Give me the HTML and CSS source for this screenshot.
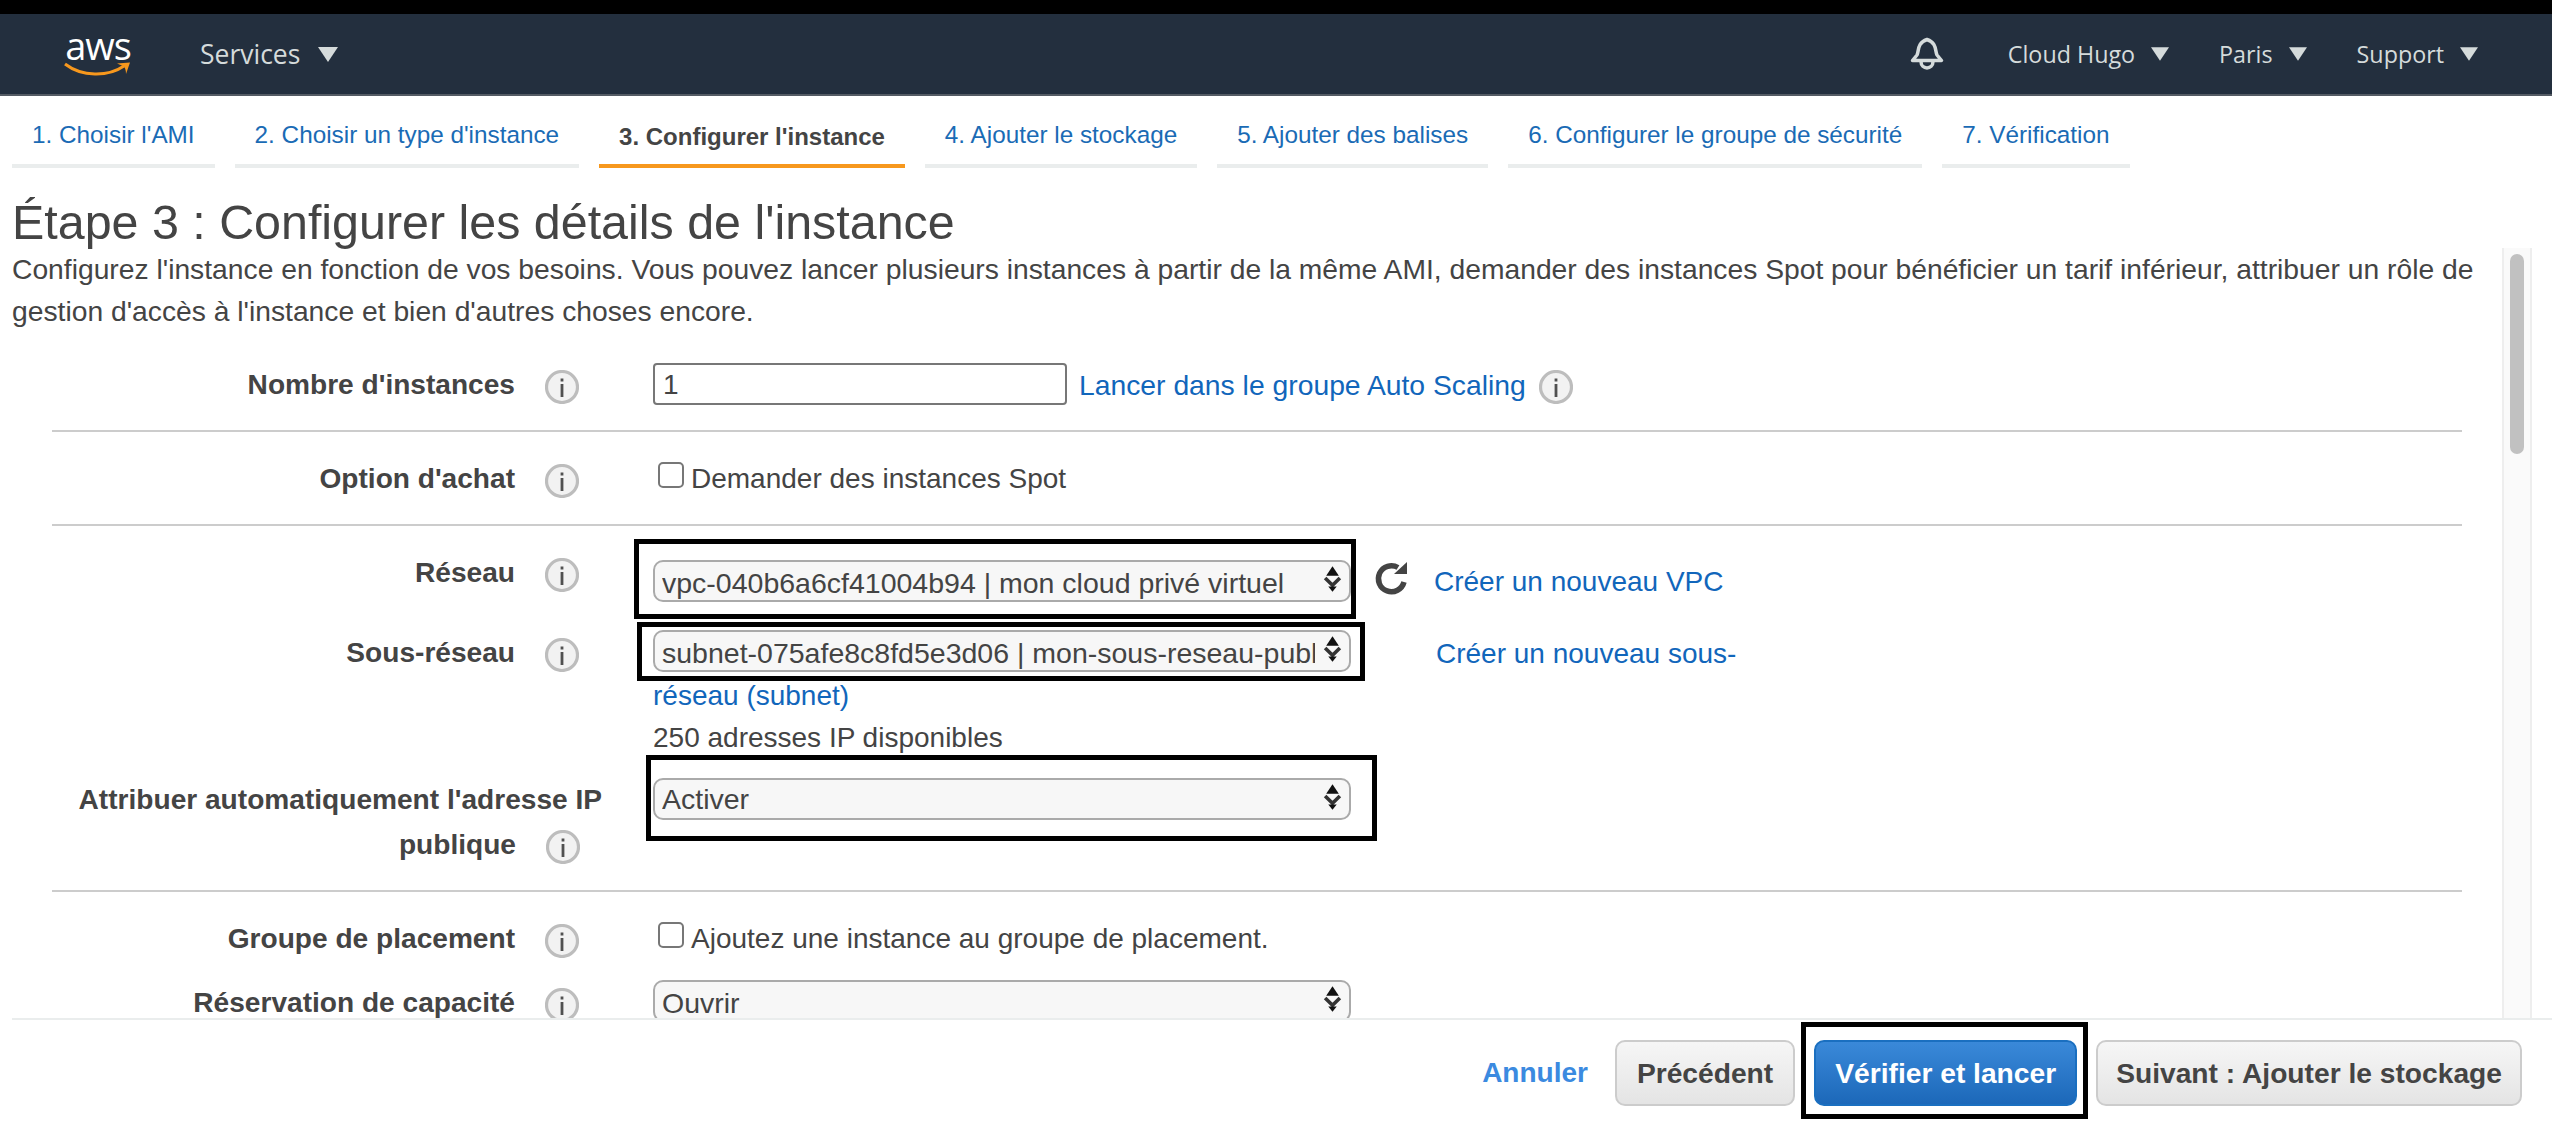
FILE: index.html
```html
<!DOCTYPE html>
<html lang="fr">
<head>
<meta charset="utf-8">
<title>Étape 3 : Configurer les détails de l'instance</title>
<link rel="stylesheet" href="styles.css">
</head>
<body>
<svg class="defs" width="0" height="0" aria-hidden="true">
  <symbol id="i-info" viewBox="0 0 34 34">
    <circle cx="17" cy="17" r="15.5" fill="#f2f2f2" stroke="#bdbdbd" stroke-width="3.200"/>
    <rect x="15.600" y="14" width="2.800" height="13" fill="#505050"/>
    <rect x="15.600" y="8.500" width="2.800" height="3" fill="#505050"/>
  </symbol>
  <symbol id="i-arrows" viewBox="0 0 18 24">
    <polygon points="9,0 15,9 3,9" fill="#111"/>
    <path d="M2 11 L9 18 L16 11" fill="none" stroke="#333" stroke-width="3.400"/>
    <polygon points="5,19 13,19 9,24" fill="#111"/>
  </symbol>
  <symbol id="i-tri" viewBox="0 0 20 15">
    <polygon points="0,0 20,0 10,15" fill="#d5dbdb"/>
  </symbol>
</svg>

<div class="topbar"></div>

<header class="nav">
  <div class="logo">
    <span class="logo-text">aws</span>
    <svg class="logo-smile" width="68" height="16" viewBox="0 0 68 16">
      <path d="M1 2 C18 15 44 15 60 4" fill="none" stroke="#f7981d" stroke-width="3"/>
      <path d="M53 1.500 L66 0.500 L62 12 C62 8 61 5 59 4 C57 3 55 2.500 53 1.500 Z" fill="#f7981d"/>
    </svg>
  </div>
  <a class="nav-item nav-services">Services<svg class="tri tri-lg"><use href="#i-tri"/></svg></a>
  <div class="nav-right">
    <svg class="bell" width="34" height="34" viewBox="0 0 34 34">
      <path d="M2.500 23.500 L7 18 C9 14 7 6 17 2.500 C27 6 25 14 27 18 L31.500 23.500 Z" fill="none" stroke="#d5dbdb" stroke-width="3.500" stroke-linejoin="round"/>
      <path d="M11 24.500 C11 33 23 33 23 24.500" fill="none" stroke="#d5dbdb" stroke-width="3.500"/>
    </svg>
    <a class="nav-item nav-sm item-user">Cloud Hugo<svg class="tri"><use href="#i-tri"/></svg></a>
    <a class="nav-item nav-sm item-region">Paris<svg class="tri"><use href="#i-tri"/></svg></a>
    <a class="nav-item nav-sm item-support">Support<svg class="tri"><use href="#i-tri"/></svg></a>
  </div>
</header>

<nav class="tabs">
  <a class="tab">1. Choisir l'AMI</a>
  <a class="tab">2. Choisir un type d'instance</a>
  <a class="tab tab-active">3. Configurer l'instance</a>
  <a class="tab">4. Ajouter le stockage</a>
  <a class="tab">5. Ajouter des balises</a>
  <a class="tab">6. Configurer le groupe de sécurité</a>
  <a class="tab">7. Vérification</a>
</nav>

<h1 class="title">Étape 3 : Configurer les détails de l'instance</h1>

<main class="scroll">
  <div class="scroll-content">
    <p class="desc">Configurez l'instance en fonction de vos besoins. Vous pouvez lancer plusieurs instances à partir de la même AMI, demander des instances Spot pour bénéficier un tarif inférieur, attribuer un rôle de gestion d'accès à l'instance et bien d'autres choses encore.</p>

    <div class="form">
      <div class="row row-count ruled">
        <div class="lbl">Nombre d'instances</div>
        <svg class="info"><use href="#i-info"/></svg>
        <div class="ctl ctl-flex ctl-count">
          <input class="text-input" type="text" value="1">
          <a class="link link-asg">Lancer dans le groupe Auto Scaling</a>
          <svg class="info info-inline"><use href="#i-info"/></svg>
        </div>
      </div>

      <div class="row row-purchase ruled">
        <div class="lbl">Option d'achat</div>
        <svg class="info"><use href="#i-info"/></svg>
        <label class="ctl check"><input class="checkbox" type="checkbox"><span>Demander des instances Spot</span></label>
      </div>

      <div class="row row-network">
        <div class="lbl">Réseau</div>
        <svg class="info"><use href="#i-info"/></svg>
        <div class="ctl ctl-flex ctl-network">
          <span class="select-wrap">
            <select class="select"><option>vpc-040b6a6cf41004b94 | mon cloud privé virtuel</option></select>
            <svg class="arrows"><use href="#i-arrows"/></svg>
            <span class="mark mark-net"></span>
          </span>
          <svg class="refresh" width="36" height="36" viewBox="0 0 36 36">
            <path d="M30 21 A13 13 0 1 1 24 6.500" fill="none" stroke="#444" stroke-width="5.500"/>
            <polygon points="20,13 33,13 33,1" fill="#444"/>
          </svg>
          <a class="link link-vpc">Créer un nouveau VPC</a>
        </div>
      </div>

      <div class="row row-subnet">
        <div class="lbl">Sous-réseau</div>
        <svg class="info"><use href="#i-info"/></svg>
        <div class="ctl ctl-subnet">
          <span class="select-wrap select-wrap-inline">
            <select class="select"><option>subnet-075afe8c8fd5e3d06 | mon-sous-reseau-public</option></select>
            <svg class="arrows"><use href="#i-arrows"/></svg>
            <span class="mark mark-sub"></span>
          </span><a class="link link-subnet">Créer un nouveau sous-réseau (subnet)</a>
          <div class="avail">250 adresses IP disponibles</div>
        </div>
      </div>

      <div class="row-ip ruled">
        <div class="lbl-wide">Attribuer automatiquement l'adresse IP<br>publique<svg class="info info-wide"><use href="#i-info"/></svg></div>
        <div class="ctl-ip">
          <span class="select-wrap">
            <select class="select"><option>Activer</option></select>
            <svg class="arrows"><use href="#i-arrows"/></svg>
            <span class="mark mark-ip"></span>
          </span>
        </div>
      </div>

      <div class="row row-group">
        <div class="lbl">Groupe de placement</div>
        <svg class="info"><use href="#i-info"/></svg>
        <label class="ctl check"><input class="checkbox" type="checkbox"><span>Ajoutez une instance au groupe de placement.</span></label>
      </div>

      <div class="row row-reserve">
        <div class="lbl">Réservation de capacité</div>
        <svg class="info"><use href="#i-info"/></svg>
        <div class="ctl ctl-reserve">
          <span class="select-wrap">
            <select class="select"><option>Ouvrir</option></select>
            <svg class="arrows"><use href="#i-arrows"/></svg>
          </span>
        </div>
      </div>
    </div>
  </div>
  <div class="scrollbar"><div class="thumb"></div></div>
</main>

<footer class="footer">
  <a class="cancel">Annuler</a>
  <button class="btn btn-prev" type="button">Précédent</button>
  <span class="btn-wrap">
    <button class="btn btn-primary" type="button">Vérifier et lancer</button>
    <span class="mark mark-btn"></span>
  </span>
  <button class="btn btn-next" type="button">Suivant : Ajouter le stockage</button>
</footer>
</body>
</html>
```

FILE: styles.css
```css
* { box-sizing: border-box; }
html, body { margin: 0; height: 100%; }
body {
  display: flex;
  flex-direction: column;
  height: 1126px;
  overflow: hidden;
  background: #fff;
  color: #444;
  font-family: "Liberation Sans", Arial, sans-serif;
  font-size: 28px;
}
.defs { position: absolute; }
.topbar { height: 14px; background: #000; flex: none; }

.nav {
  flex: none;
  height: 82px;
  display: flex;
  align-items: center;
  background: #232f3e;
  border-bottom: 2px solid #545b64;
  color: #d5dbdb;
  font-family: "Open Sans", sans-serif;
}
.logo {
  width: 68px;
  margin-left: 64px;
  display: flex;
  flex-direction: column;
  align-items: center;
}
.logo-text {
  color: #fff;
  font-family: "Open Sans", sans-serif;
  font-size: 38px;
  line-height: 30px;
  letter-spacing: -1px;
}
.logo-smile { display: block; margin-top: 2px; }
.nav-item { display: flex; align-items: center; }
.nav-services { margin-left: 68px; font-size: 26.500px; }
.nav-right { margin-left: auto; margin-right: 74px; display: flex; align-items: center; }
.bell { display: block; margin-right: 7px; }
.nav-sm { font-size: 23.300px; }
.item-user { margin-left: 57px; }
.item-region { margin-left: 50px; }
.item-support { margin-left: 50px; }
.tri { width: 18px; height: 14px; margin-left: 16px; }
.tri-lg { width: 20px; height: 15px; margin-left: 18px; }

.tabs {
  flex: none;
  display: flex;
  gap: 20px;
  padding: 0 0 0 12px;
  height: 72px;
}
.tab {
  display: flex;
  align-items: flex-end;
  padding: 0 20px 14px;
  border-bottom: 4px solid #eaeded;
  color: #1a6bb5;
  font-size: 24.300px;
  line-height: 30px;
}
.tab-active {
  color: #444;
  font-weight: 700;
  font-size: 24px;
  border-bottom-color: #f7981d;
  padding-bottom: 12px;
}

.title {
  flex: none;
  margin: 0;
  height: 80px;
  padding: 29px 0 0 12px;
  font-size: 48.400px;
  line-height: 50px;
  font-weight: 400;
  color: #444;
}

.scroll {
  flex: none;
  display: flex;
  height: 772px;
  margin-left: 12px;
  border-bottom: 2px solid #eaeded;
  overflow: hidden;
}
.scroll-content {
  width: 2490px;
  padding-right: 20px;
  overflow: hidden;
}
.desc { margin: 0; width: 2470px; line-height: 42px; height: 84px; font-size: 28.250px; }

.form { margin-left: 40px; width: 2410px; }
.row {
  display: grid;
  grid-template-columns: 463px 65px 1fr;
  align-items: start;
}
.ruled { border-bottom: 2px solid #ccc; }
.lbl { font-weight: 700; text-align: right; line-height: 42px; font-size: 28.100px; }
.info { width: 34px; height: 34px; margin-top: 6px; margin-left: 30px; grid-column: 2; overflow: visible; }
.ctl { margin-left: 73px; line-height: 42px; }
.ctl-flex { display: flex; align-items: flex-start; }

.row-count { padding: 32px 0 24px; }
.row-purchase { padding: 26px 0 24px; }
.row-network { padding-top: 26px; }
.row-subnet { padding-top: 30px; }
.row-ip { display: flex; padding: 19px 0 23px; }
.row-group { padding-top: 26px; }
.row-reserve { padding-top: 22px; }

.text-input {
  width: 414px;
  height: 42px;
  margin-top: -1px;
  border: 2px solid #777;
  border-radius: 4px;
  padding: 2px 8px 0;
  font: inherit;
  color: #444;
  background: #fff;
}
.link { color: #1166bb; }
.link-asg { margin-left: 12px; line-height: 42px; font-size: 28.300px; }
.info-inline { margin-left: 13px; margin-top: 6px; width: 34px; height: 34px; }

.check { display: flex; align-items: flex-start; gap: 7px; }
.checkbox {
  appearance: none;
  width: 26px;
  height: 26px;
  margin: 4px 0 0 5px;
  border: 2px solid #777;
  border-radius: 5px;
  background: #fff;
  flex: none;
}

.select-wrap { position: relative; display: inline-block; width: 698px; height: 42px; vertical-align: top; }
.select-wrap-inline { vertical-align: baseline; }
.select {
  appearance: none;
  display: block;
  width: 100%;
  height: 42px;
  border: 2px solid #aaa;
  border-radius: 10px;
  background: #f7f7f7;
  color: #444;
  font: inherit;
  font-size: 28.500px;
  padding: 0 34px 0 7px;
}
.arrows { position: absolute; right: 9px; top: 6px; width: 19px; height: 26px; }
.mark { position: absolute; border: 5px solid #000; pointer-events: none; }
.mark-net { top: -21px; left: -19px; right: -5px; bottom: -17px; }
.mark-sub { top: -8px; left: -16px; right: -14px; bottom: -9px; }
.mark-ip { top: -23px; left: -7px; right: -26px; bottom: -21px; }
.mark-btn { top: -18px; left: -13px; right: -11px; bottom: -13px; }

.ctl-network { padding-top: 8px; }
.refresh { margin: 1px 0 0 23px; }
.link-vpc { margin-left: 24px; padding-top: 1px; height: 42px; }
.ctl-subnet { margin-top: -2px; width: 1090px; }
.link-subnet { margin-left: 85px; }
.lbl-wide { width: 550px; margin-top: -1px; text-align: right; font-weight: 700; line-height: 45px; font-size: 28.100px; }
.info-wide { margin: 0 22px 0 30px; vertical-align: middle; }
.ctl-ip { margin-left: 51px; }
.ctl-reserve { margin-top: -2px; }

.scrollbar {
  flex: none;
  width: 30px;
  background: #fafafa;
  border-left: 2px solid #eee;
  border-right: 2px solid #eee;
  padding: 6px 6px 0;
}
.thumb { height: 200px; border-radius: 8px; background: #c1c1c1; }

.footer {
  flex: 1;
  display: flex;
  align-items: center;
  justify-content: flex-end;
  padding: 0 30px 0 0;
  gap: 19px;
}
.cancel { color: #3b8ae0; font-weight: 700; margin-right: 8px; font-size: 28px; }
.btn-wrap { position: relative; display: block; }
.btn {
  display: block;
  height: 66px;
  padding: 0 19px;
  border: 2px solid #ccc;
  border-radius: 10px;
  background: linear-gradient(#f6f6f6, #e4e4e4);
  color: #444;
  font: 700 28.200px "Liberation Sans", Arial, sans-serif;
}
.btn-prev { padding: 0 20px; }
.btn-next { padding: 0 18px; }
.btn-primary {
  border-color: #1a6fc0;
  background: linear-gradient(#3a89d9, #1c68b9);
  color: #fff;
}
```
